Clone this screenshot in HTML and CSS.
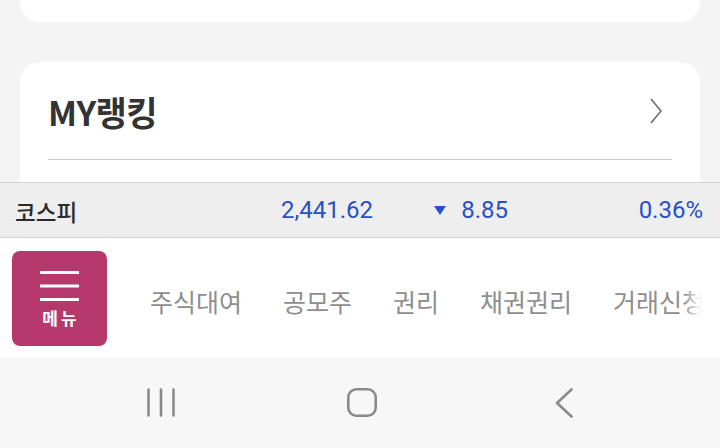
FILE: index.html
```html
<!DOCTYPE html>
<html lang="ko">
<head>
<meta charset="utf-8">
<link rel="stylesheet" href="styles.css">
</head>
<body>
<div class="screen">
  <div class="content">
    <div class="card card-top"></div>
    <div class="card card-rank">
      <div class="rank-head">
        <h2 class="rank-title">MY랭킹</h2>
        <svg class="chevron" width="12" height="26" viewBox="0 0 12 26"><path d="M1 1 L11 13 L1 25" fill="none" stroke="#666" stroke-width="1.5"/></svg>
      </div>
      <div class="divider"></div>
    </div>
  </div>
  <div class="index-bar">
    <span class="idx-name">코스피</span>
    <span class="idx-val">2,441.62</span>
    <span class="idx-val idx-chg"><svg class="tri" width="12" height="9" viewBox="0 0 12 9"><path d="M0 0 H12 L6 9 Z" fill="#2850c8"/></svg>8.85</span>
    <span class="idx-val">0.36%</span>
  </div>
  <div class="menu-row">
    <button class="menu-btn">
      <svg width="39" height="30" viewBox="0 0 39 30"><path d="M0 1.5 H39 M0 15 H39 M0 28.5 H39" stroke="#fff" stroke-width="3"/></svg>
      <span class="menu-label">메뉴</span>
    </button>
    <nav class="tabs">
      <span class="tab">주식대여</span>
      <span class="tab">공모주</span>
      <span class="tab">권리</span>
      <span class="tab">채권권리</span>
      <span class="tab">거래신청</span>
    </nav>
  </div>
  <div class="sys-nav">
    <svg class="nav-recent" width="28" height="29" viewBox="0 0 28 29"><path d="M1.5 1.5 V27.5 M14 1.5 V27.5 M26.5 1.5 V27.5" stroke="#8a8a8a" stroke-width="2.6" stroke-linecap="round"/></svg>
    <svg class="nav-home" width="30" height="29" viewBox="0 0 30 29"><rect x="1.3" y="1.3" width="27.4" height="26.4" rx="8" fill="none" stroke="#8a8a8a" stroke-width="2.6"/></svg>
    <svg class="nav-back" width="18" height="30" viewBox="0 0 18 30"><path d="M16.5 1.5 L2 15 L16.5 28.5" fill="none" stroke="#8a8a8a" stroke-width="2.6" stroke-linecap="round" stroke-linejoin="round"/></svg>
  </div>
</div>
</body>
</html>
```
FILE: styles.css
```css
* { box-sizing: border-box; }
html, body { margin: 0; padding: 0; }
body {
  width: 720px;
  height: 448px;
  overflow: hidden;
  background: #f4f4f4;
  font-family: "Noto Sans CJK KR", "Noto Sans", sans-serif;
}
.screen {
  display: flex;
  flex-direction: column;
  height: 448px;
}
.content {
  height: 182px;
  overflow: hidden;
  padding: 0 20px;
  display: flex;
  flex-direction: column;
  gap: 40px;
}
.card {
  background: #fff;
}
.card-top {
  height: 22px;
  flex: none;
  border-radius: 0 0 20px 20px;
}
.card-rank {
  flex: none;
  height: 200px;
  border-radius: 20px;
  padding: 0 28px;
}
.rank-head {
  height: 97px;
  display: flex;
  align-items: center;
  justify-content: space-between;
  padding-right: 10px;
}
.rank-title {
  margin: 0;
  font-size: 34px;
  font-weight: 700;
  color: #333;
  letter-spacing: -0.6px;
  line-height: 40px;
  padding-top: 2px;
}
.chevron { display: block; }
.divider {
  height: 1px;
  background: #cccccc;
}
.index-bar {
  height: 56px;
  flex: none;
  background: #eeeeee;
  border-top: 1px solid #d4d4d4;
  border-bottom: 1px solid #d4d4d4;
  display: grid;
  grid-template-columns: 1fr 100px 135px 195px;
  align-items: center;
  padding: 0 17px 0 15px;
}
.idx-name {
  font-size: 22.5px;
  color: #2a2a2a;
  font-weight: 500;
  padding-top: 2px;
}
.idx-val {
  font-family: Roboto, "Noto Sans", sans-serif;
  font-size: 24px;
  color: #2850c8;
  text-align: right;
}
.idx-chg {
  display: flex;
  align-items: center;
  justify-content: flex-end;
  gap: 15px;
}
.tri { display: block; }
.menu-row {
  position: relative;
  height: 119px;
  flex: none;
  background: #fff;
  display: flex;
  align-items: flex-start;
  padding: 13px 0 0 12px;
}
.menu-row::after {
  content: "";
  position: absolute;
  top: 0;
  right: 0;
  bottom: 0;
  width: 36px;
  background: linear-gradient(to right, rgba(255,255,255,0), rgba(255,255,255,0.9) 40%, #fff 70%);
}
.menu-btn {
  width: 95px;
  height: 95px;
  border: none;
  border-radius: 8px;
  background: #b5396a;
  display: flex;
  flex-direction: column;
  align-items: center;
  padding: 20px 0 0;
  flex: none;
}
.menu-btn svg { display: block; }
.menu-label {
  margin-top: 7px;
  color: #fff;
  font-family: "Noto Sans CJK KR", sans-serif;
  font-size: 17px;
  font-weight: 700;
  line-height: 20px;
  letter-spacing: 3px;
  padding-left: 3px;
}
.tabs {
  flex: 1;
  display: flex;
  gap: 41px;
  padding-left: 43px;
  height: 95px;
  align-items: center;
  overflow: hidden;
  white-space: nowrap;
}
.tab {
  font-size: 25px;
  color: #8e8e8e;
  flex: none;
  padding-top: 4px;
}
.sys-nav {
  flex: 1;
  background: #f7f7f7;
  display: flex;
  align-items: center;
  padding-left: 147px;
}
.sys-nav svg { display: block; }
.nav-home { margin-left: 172px; }
.nav-back { margin-left: 178px; }
```
